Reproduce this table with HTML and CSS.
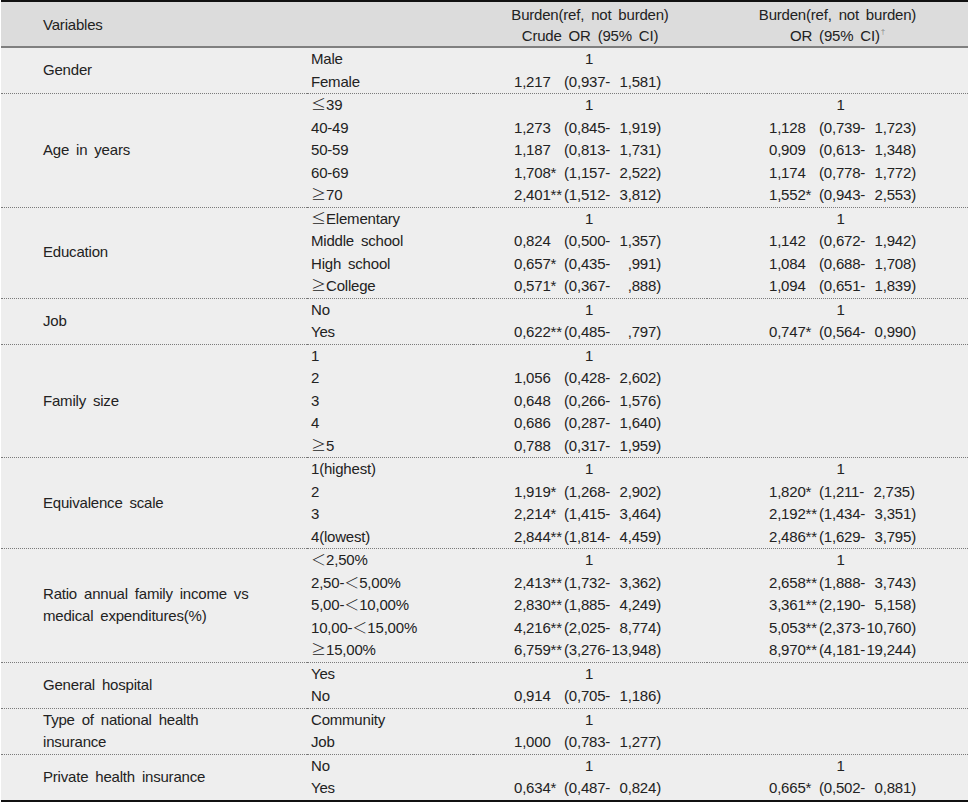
FILE: index.html
```html
<!DOCTYPE html>
<html>
<head>
<meta charset="utf-8">
<link rel="stylesheet" href="styles.css">
</head>
<body>
<table class="tbl">
  <colgroup>
    <col class="w1"><col class="w2"><col class="w3"><col class="w4">
  </colgroup>
  <thead>
    <tr>
      <th class="hv" colspan="2">Variables</th>
      <th class="hc">Burden(ref, not burden)<br>Crude OR (95% CI)</th>
      <th class="hc">Burden(ref, not burden)<br>OR (95% CI)<sup class="dag">†</sup></th>
    </tr>
  </thead>
  <tbody>
    <tr><td class="var" rowspan="2">Gender</td><td class="cat">Male</td><td class="c3 one">1</td><td class="c4"></td></tr>
    <tr><td class="cat">Female</td><td class="c3"><span class="or">1,217</span>(0,937-<span class="hi">1,581</span>)</td><td class="c4"></td></tr>
  </tbody>
  <tbody>
    <tr><td class="var" rowspan="5">Age in years</td><td class="cat"><span class="sym">≤</span>39</td><td class="c3 one">1</td><td class="c4 one">1</td></tr>
    <tr><td class="cat">40-49</td><td class="c3"><span class="or">1,273</span>(0,845-<span class="hi">1,919</span>)</td><td class="c4"><span class="or">1,128</span>(0,739-<span class="hi">1,723</span>)</td></tr>
    <tr><td class="cat">50-59</td><td class="c3"><span class="or">1,187</span>(0,813-<span class="hi">1,731</span>)</td><td class="c4"><span class="or">0,909</span>(0,613-<span class="hi">1,348</span>)</td></tr>
    <tr><td class="cat">60-69</td><td class="c3"><span class="or">1,708*</span>(1,157-<span class="hi">2,522</span>)</td><td class="c4"><span class="or">1,174</span>(0,778-<span class="hi">1,772</span>)</td></tr>
    <tr><td class="cat"><span class="sym">≥</span>70</td><td class="c3"><span class="or">2,401**</span>(1,512-<span class="hi">3,812</span>)</td><td class="c4"><span class="or">1,552*</span>(0,943-<span class="hi">2,553</span>)</td></tr>
  </tbody>
  <tbody>
    <tr><td class="var" rowspan="4">Education</td><td class="cat"><span class="sym">≤</span>Elementary</td><td class="c3 one">1</td><td class="c4 one">1</td></tr>
    <tr><td class="cat">Middle school</td><td class="c3"><span class="or">0,824</span>(0,500-<span class="hi">1,357</span>)</td><td class="c4"><span class="or">1,142</span>(0,672-<span class="hi">1,942</span>)</td></tr>
    <tr><td class="cat">High school</td><td class="c3"><span class="or">0,657*</span>(0,435-<span class="hi">,991</span>)</td><td class="c4"><span class="or">1,084</span>(0,688-<span class="hi">1,708</span>)</td></tr>
    <tr><td class="cat"><span class="sym">≥</span>College</td><td class="c3"><span class="or">0,571*</span>(0,367-<span class="hi">,888</span>)</td><td class="c4"><span class="or">1,094</span>(0,651-<span class="hi">1,839</span>)</td></tr>
  </tbody>
  <tbody>
    <tr><td class="var" rowspan="2">Job</td><td class="cat">No</td><td class="c3 one">1</td><td class="c4 one">1</td></tr>
    <tr><td class="cat">Yes</td><td class="c3"><span class="or">0,622**</span>(0,485-<span class="hi">,797</span>)</td><td class="c4"><span class="or">0,747*</span>(0,564-<span class="hi">0,990</span>)</td></tr>
  </tbody>
  <tbody>
    <tr><td class="var" rowspan="5">Family size</td><td class="cat">1</td><td class="c3 one">1</td><td class="c4"></td></tr>
    <tr><td class="cat">2</td><td class="c3"><span class="or">1,056</span>(0,428-<span class="hi">2,602</span>)</td><td class="c4"></td></tr>
    <tr><td class="cat">3</td><td class="c3"><span class="or">0,648</span>(0,266-<span class="hi">1,576</span>)</td><td class="c4"></td></tr>
    <tr><td class="cat">4</td><td class="c3"><span class="or">0,686</span>(0,287-<span class="hi">1,640</span>)</td><td class="c4"></td></tr>
    <tr><td class="cat"><span class="sym">≥</span>5</td><td class="c3"><span class="or">0,788</span>(0,317-<span class="hi">1,959</span>)</td><td class="c4"></td></tr>
  </tbody>
  <tbody>
    <tr><td class="var" rowspan="4">Equivalence scale</td><td class="cat">1(highest)</td><td class="c3 one">1</td><td class="c4 one">1</td></tr>
    <tr><td class="cat">2</td><td class="c3"><span class="or">1,919*</span>(1,268-<span class="hi">2,902</span>)</td><td class="c4"><span class="or">1,820*</span>(1,211-<span class="hi">2,735</span>)</td></tr>
    <tr><td class="cat">3</td><td class="c3"><span class="or">2,214*</span>(1,415-<span class="hi">3,464</span>)</td><td class="c4"><span class="or">2,192**</span>(1,434-<span class="hi">3,351</span>)</td></tr>
    <tr><td class="cat">4(lowest)</td><td class="c3"><span class="or">2,844**</span>(1,814-<span class="hi">4,459</span>)</td><td class="c4"><span class="or">2,486**</span>(1,629-<span class="hi">3,795</span>)</td></tr>
  </tbody>
  <tbody>
    <tr><td class="var" rowspan="5">Ratio annual family income vs<br>medical expenditures(%)</td><td class="cat"><span class="sym">＜</span>2,50%</td><td class="c3 one">1</td><td class="c4 one">1</td></tr>
    <tr><td class="cat">2,50-<span class="sym">＜</span>5,00%</td><td class="c3"><span class="or">2,413**</span>(1,732-<span class="hi">3,362</span>)</td><td class="c4"><span class="or">2,658**</span>(1,888-<span class="hi">3,743</span>)</td></tr>
    <tr><td class="cat">5,00-<span class="sym">＜</span>10,00%</td><td class="c3"><span class="or">2,830**</span>(1,885-<span class="hi">4,249</span>)</td><td class="c4"><span class="or">3,361**</span>(2,190-<span class="hi">5,158</span>)</td></tr>
    <tr><td class="cat">10,00-<span class="sym">＜</span>15,00%</td><td class="c3"><span class="or">4,216**</span>(2,025-<span class="hi">8,774</span>)</td><td class="c4"><span class="or">5,053**</span>(2,373-<span class="hi">10,760</span>)</td></tr>
    <tr><td class="cat"><span class="sym">≥</span>15,00%</td><td class="c3"><span class="or">6,759**</span>(3,276-<span class="hi">13,948</span>)</td><td class="c4"><span class="or">8,970**</span>(4,181-<span class="hi">19,244</span>)</td></tr>
  </tbody>
  <tbody>
    <tr><td class="var" rowspan="2">General hospital</td><td class="cat">Yes</td><td class="c3 one">1</td><td class="c4"></td></tr>
    <tr><td class="cat">No</td><td class="c3"><span class="or">0,914</span>(0,705-<span class="hi">1,186</span>)</td><td class="c4"></td></tr>
  </tbody>
  <tbody>
    <tr><td class="var" rowspan="2">Type of national health<br>insurance</td><td class="cat">Community</td><td class="c3 one">1</td><td class="c4"></td></tr>
    <tr><td class="cat">Job</td><td class="c3"><span class="or">1,000</span>(0,783-<span class="hi">1,277</span>)</td><td class="c4"></td></tr>
  </tbody>
  <tbody>
    <tr><td class="var" rowspan="2">Private health insurance</td><td class="cat">No</td><td class="c3 one">1</td><td class="c4 one">1</td></tr>
    <tr><td class="cat">Yes</td><td class="c3"><span class="or">0,634*</span>(0,487-<span class="hi">0,824</span>)</td><td class="c4"><span class="or">0,665*</span>(0,502-<span class="hi">0,881</span>)</td></tr>
  </tbody>
</table>
</body>
</html>
```
FILE: styles.css
```css
html, body {
  margin: 0;
  padding: 0;
  background: #ffffff;
}
body {
  font-family: "Liberation Sans", Arial, sans-serif;
  font-size: 15px;
  color: #222222;
  letter-spacing: -0.2px;
  word-spacing: 3px;
}
.tbl {
  border-collapse: collapse;
  table-layout: fixed;
  width: 967px;
  margin-left: 1px;
  background: #eeeeee;
  border-top: 2px solid #111111;
  border-bottom: 3px solid #111111;
}
.w1 { width: 306px; }
.w2 { width: 166px; }
.w3 { width: 234px; }
.w4 { width: 261px; }

thead th {
  background: #dcdcdc;
  font-weight: normal;
  height: 44px;
  box-sizing: border-box;
  padding: 3px 0 0 0;
  line-height: 20.5px;
  border-bottom: 2px solid #7f7f7f;
  vertical-align: middle;
}
.hv {
  text-align: left;
  padding-left: 42px;
}
.hc {
  text-align: center;
}
.dag {
  font-size: 8px;
  color: #888888;
  vertical-align: 7px;
  line-height: 0;
  margin-left: 1px;
}
tbody td {
  padding: 0;
  line-height: 22.5px;
  height: 22.5px;
  white-space: nowrap;
  vertical-align: middle;
}
tbody + tbody tr:first-child td,
tbody + tbody td.var {
  border-top: 1px dotted #7a7a7a;
}
.var {
  padding-left: 42px;
}
.cat {
  padding-left: 4px;
}
.sym {
  font-family: "Noto Sans CJK KR", "Liberation Sans", sans-serif;
  font-weight: 300;
  letter-spacing: 0;
  line-height: 0;
}
.c3 {
  padding-left: 41px;
}
.c4 {
  padding-left: 62px;
}
.one {
  padding-left: 0;
  text-align: center;
}
.c3.one { padding-right: 2px; }
.c4.one { padding-left: 6px; }
.or {
  display: inline-block;
  width: 50px;
  word-spacing: 0;
}
.hi {
  display: inline-block;
  width: 46px;
  text-align: right;
}
```
